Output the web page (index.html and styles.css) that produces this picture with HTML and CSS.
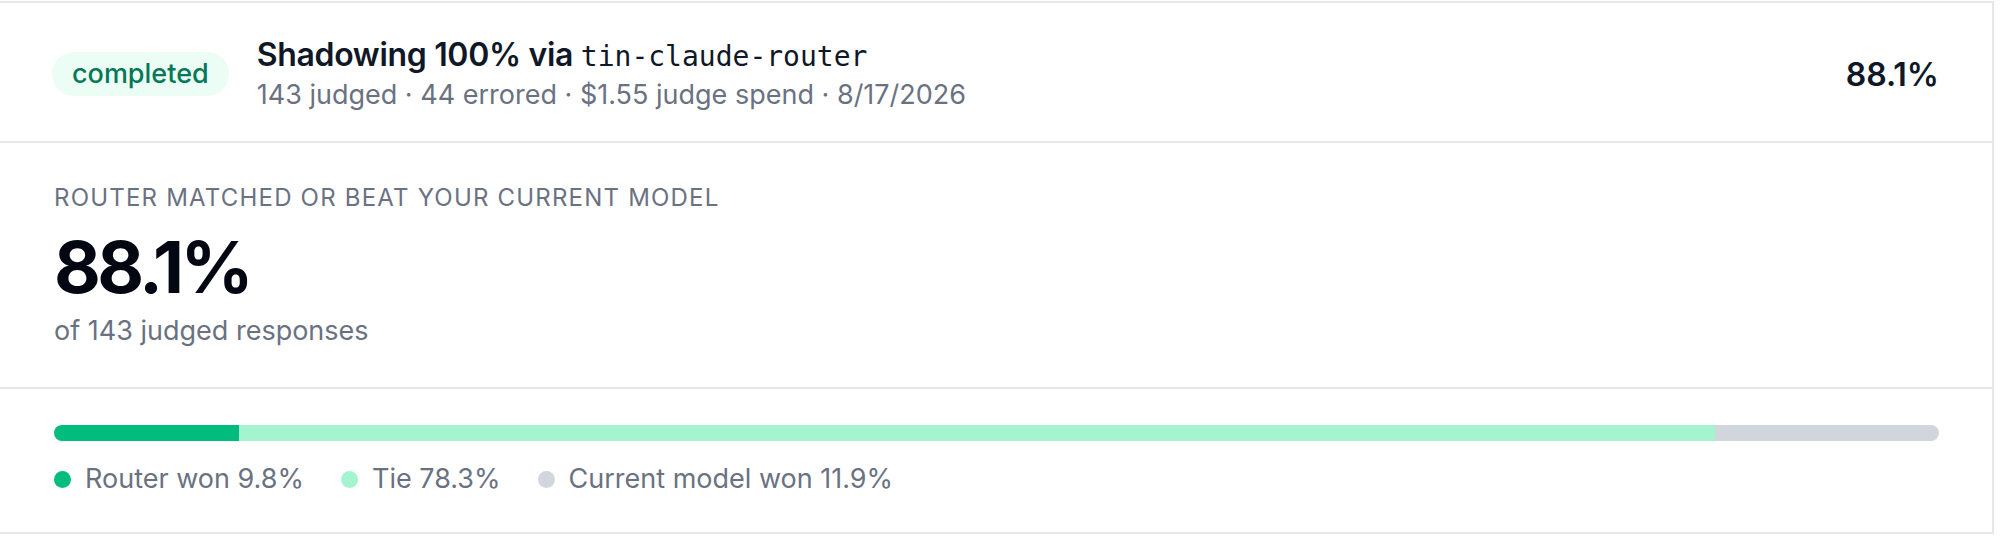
FILE: index.html
```html
<!doctype html>
<html lang="en">
  <head>
    <meta charset="UTF-8" />
    <meta name="viewport" content="width=device-width, initial-scale=1.0" />
    <title>Shadow run</title>
    <link rel="stylesheet" href="styles.css">
  </head>
  <body>
    <div class="run-card">
      <!-- Run summary -->
      <header class="run-header">
        <span class="badge badge-done">completed</span>
        <div class="run-info">
          <div class="run-title">Shadowing 100% via <code>tin-claude-router</code></div>
          <div class="run-meta">143 judged · 44 errored · $1.55 judge spend · 8/17/2026</div>
        </div>
        <div class="run-score">88.1%</div>
      </header>

      <!-- Headline number -->
      <section class="run-section headline">
        <div class="stat-label">Router matched or beat your current model</div>
        <div class="stat-value">88.1%</div>
        <div class="stat-sub">of 143 judged responses</div>
      </section>

      <!-- Outcome split -->
      <section class="run-section split">
        <div class="split-bar">
          <div class="seg seg-won" style="width: 9.8%"></div>
          <div class="seg seg-tie" style="width: 78.3%"></div>
          <div class="seg seg-lost" style="width: 11.9%"></div>
        </div>
        <ul class="legend">
          <li><span class="dot seg-won"></span>Router won 9.8%</li>
          <li><span class="dot seg-tie"></span>Tie 78.3%</li>
          <li><span class="dot seg-lost"></span>Current model won 11.9%</li>
        </ul>
      </section>
    </div>
  </body>
</html>
```

FILE: styles.css
```css
/* General */
body {
  margin: 0;
  padding: 1px 0 0;
  background: #fff;
  font-family: Inter, "Noto Sans", sans-serif;
  color: #101828;
}

.run-card {
  width: 1992px;
  border-top: 2px solid #e5e7eb;
  border-right: 2px solid #e5e7eb;
  border-bottom: 2px solid #e5e7eb;
}

/* Header row */
.run-header {
  display: flex;
  align-items: center;
  gap: 28px;
  padding: 32px 53px 28px 52px;
  border-bottom: 2px solid #e5e7eb;
}

.badge {
  font-size: 27px;
  font-weight: 500;
  line-height: 36px;
  padding: 4px 20px;
  border-radius: 999px;
}

.badge-done {
  background-color: #ecfdf5;
  color: #047857;
}

.run-info {
  flex: 1;
}

.run-title {
  font-size: 32px;
  font-weight: 600;
  line-height: 40px;
  letter-spacing: -0.01em;
}

.run-title code {
  font-family: "DejaVu Sans Mono", "Liberation Mono", monospace;
  font-size: 28px;
  font-weight: 400;
  letter-spacing: 0;
}

.run-meta {
  font-size: 27px;
  line-height: 36px;
  color: #6a7282;
}

.run-score {
  font-size: 32px;
  font-weight: 600;
}

/* Sections */
.run-section {
  padding: 39px 53px 39px 54px;
  border-bottom: 2px solid #e5e7eb;
}

.run-section:last-child {
  border-bottom: none;
}

.headline {
  padding-bottom: 36px;
}

.stat-label {
  font-size: 24px;
  line-height: 32px;
  text-transform: uppercase;
  letter-spacing: 0.05em;
  color: #6a7282;
}

.stat-value {
  margin-top: 17px;
  font-size: 72px;
  font-weight: 700;
  line-height: 72px;
  letter-spacing: -0.05em;
  color: #030712;
}

.stat-sub {
  margin-top: 8px;
  font-size: 27px;
  line-height: 40px;
  color: #6a7282;
}

/* Split bar */
.split {
  padding-top: 36px;
  padding-bottom: 33px;
}

.split-bar {
  display: flex;
  height: 16px;
  border-radius: 999px;
  overflow: hidden;
}

.seg-won {
  background-color: #00bc7d;
}

.seg-tie {
  background-color: #a4f4cf;
}

.seg-lost {
  background-color: #d1d5dc;
}

.legend {
  display: flex;
  gap: 37px;
  margin: 18px 0 0;
  padding: 0;
  list-style: none;
}

.legend li {
  display: flex;
  align-items: center;
  gap: 14px;
  font-size: 27px;
  line-height: 40px;
  color: #6a7282;
}

.dot {
  width: 17px;
  height: 17px;
  border-radius: 50%;
}
```
